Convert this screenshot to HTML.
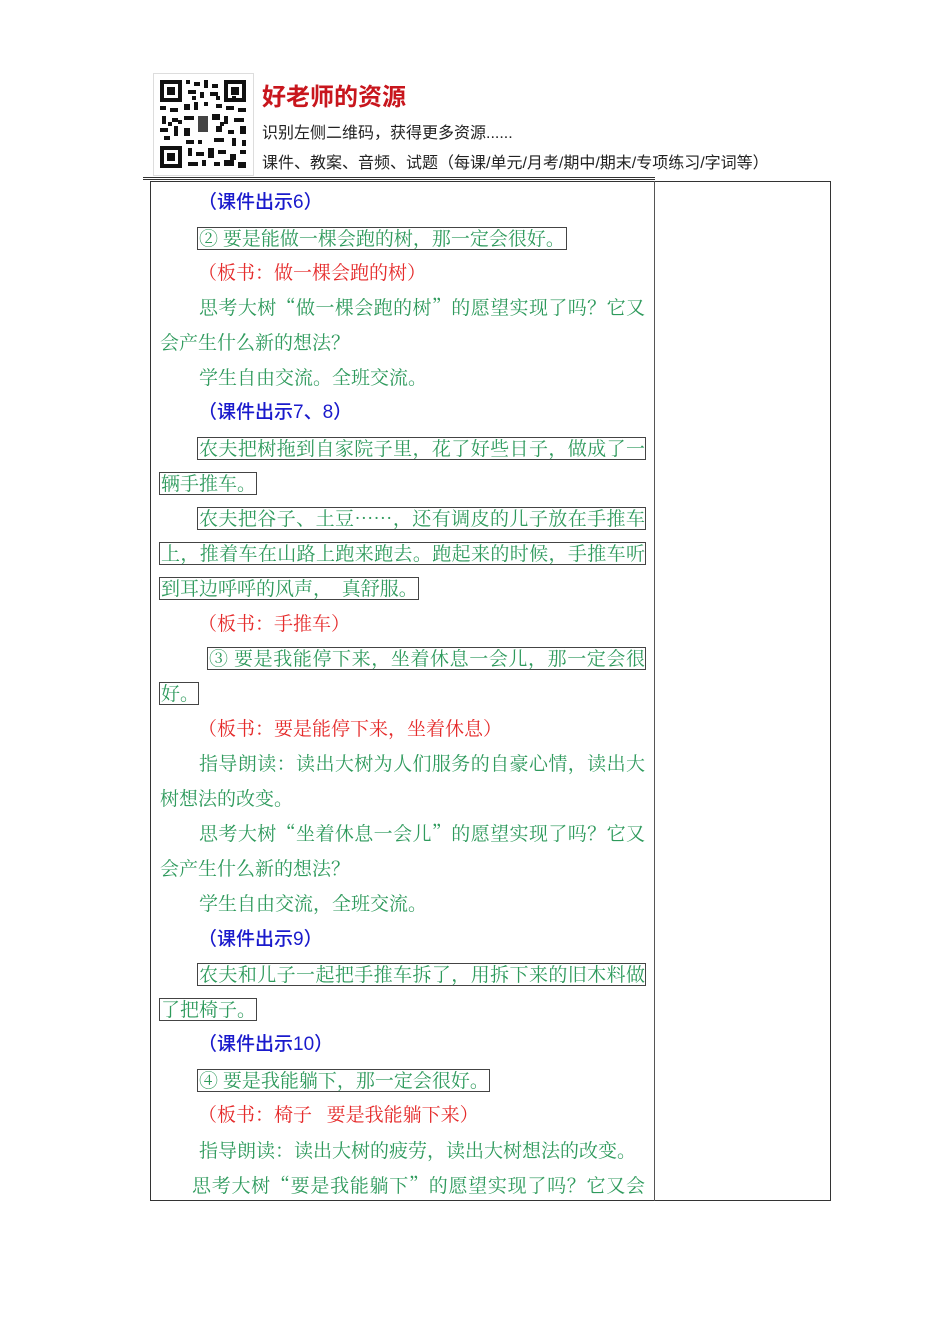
<!DOCTYPE html>
<html><head><meta charset="utf-8"><style>
body{margin:0;width:950px;height:1344px;background:#fff;position:relative;overflow:hidden}
.l{position:absolute;height:24px;line-height:24px;margin-top:-1px;font-size:19px;font-family:"Noto Serif CJK SC","Liberation Serif",serif;white-space:nowrap;color:#2e9a5c}
.j{text-align:justify;text-align-last:justify}
.b{border:1px solid #444;box-sizing:border-box;height:23px;line-height:19px;margin-top:0;padding-left:1px}
.bl{color:#1a1acc;font-family:"Liberation Sans","Noto Sans CJK SC",sans-serif;font-weight:500;margin-top:0}
.r{color:#e52a2a}
.h{position:absolute;font-family:"Liberation Sans","Noto Sans CJK SC",sans-serif;white-space:nowrap;color:#222}
</style></head><body>
<div style="position:absolute;left:153px;top:73px;width:101px;height:103px;border:1px solid #ddd;box-sizing:border-box;background:#fff">
<svg width="99" height="101" viewBox="0 0 99 101">
<g fill="#111">
<rect x="6" y="6" width="22" height="22"/><rect x="10" y="10" width="14" height="14" fill="#fff"/><rect x="13" y="13" width="8" height="8"/>
<rect x="70" y="6" width="22" height="22"/><rect x="74" y="10" width="14" height="14" fill="#fff"/><rect x="77" y="13" width="8" height="8"/>
<rect x="6" y="72" width="22" height="22"/><rect x="10" y="76" width="14" height="14" fill="#fff"/><rect x="13" y="79" width="8" height="8"/>
<path d="M32 6h4v4h-4zM40 8h6v4h-6zM50 6h4v8h-4zM58 10h6v4h-6zM34 16h8v4h-8zM46 18h4v6h-4zM56 18h8v4h-8zM6 32h6v4h-6zM16 34h8v4h-8zM30 30h6v6h-6zM40 28h4v8h-4zM62 30h6v4h-6zM72 32h8v4h-8zM84 34h8v4h-8zM8 42h4v8h-4zM18 44h6v4h-6zM30 42h10v4h-10zM58 40h8v6h-8zM70 42h4v8h-4zM80 44h10v4h-10zM6 54h8v4h-8zM20 52h4v10h-4zM30 54h6v8h-6zM62 52h6v6h-6zM74 56h6v4h-6zM86 52h6v8h-6zM10 62h6v4h-6zM32 66h8v4h-8zM60 64h10v4h-10zM78 64h4v8h-4zM88 66h4v6h-4zM34 74h4v8h-4zM42 78h8v4h-8zM54 74h6v10h-6zM64 76h8v4h-8zM76 80h6v6h-6zM86 76h6v4h-6zM34 88h10v4h-10zM48 86h4v6h-4zM60 88h6v4h-6zM70 86h10v6h-10zM84 88h8v6h-8zM38 22h4v4h-4zM62 22h4v4h-4zM24 46h4v4h-4zM66 48h4v4h-4zM44 66h4v4h-4zM14 48h4v4h-4zM82 22h-4v4h4zM50 28h4v4h-4z"/>
<rect x="40" y="38" width="18" height="24" fill="#fff"/><rect x="44" y="42" width="10" height="16" fill="#444"/>
</g></svg></div>
<div class="h" style="left:262px;top:77px;font-size:24px;font-weight:bold;color:#c8161d">好老师的资源</div>
<div class="h" style="left:262px;top:119px;font-size:16px">识别左侧二维码，获得更多资源......</div>
<div class="h" style="left:262px;top:149px;font-size:16px">课件、教案、音频、试题（每课/单元/月考/期中/期末/专项练习/字词等）</div>
<div style="position:absolute;left:143px;top:177px;width:512px;height:1px;background:#333"></div>
<div style="position:absolute;left:143px;top:179px;width:512px;height:1px;background:#333"></div>
<div style="position:absolute;left:150px;top:181px;width:681px;height:1020px;border:1px solid #333;box-sizing:border-box"></div>
<div style="position:absolute;left:654px;top:181px;width:1px;height:1020px;background:#555"></div>

<div class="l bl" style="left:198px;top:191px">（课件出示6）</div>
<div class="l b" style="left:197px;top:227px;width:370px">② 要是能做一棵会跑的树，那一定会很好。</div>
<div class="l r" style="left:198px;top:261px">（板书：做一棵会跑的树）</div>
<div class="l j" style="left:199px;top:296px;width:446px">思考大树“做一棵会跑的树”的愿望实现了吗？它又</div>
<div class="l" style="left:160px;top:331px">会产生什么新的想法？</div>
<div class="l" style="left:199px;top:366px">学生自由交流。全班交流。</div>
<div class="l bl" style="left:198px;top:401px">（课件出示7、8）</div>
<div class="l b j" style="left:197px;top:437px;width:449px">农夫把树拖到自家院子里，花了好些日子，做成了一</div>
<div class="l b" style="left:159px;top:472px;width:98px">辆手推车。</div>
<div class="l b j" style="left:197px;top:507px;width:449px">农夫把谷子、土豆……，还有调皮的儿子放在手推车</div>
<div class="l b j" style="left:159px;top:542px;width:487px">上，推着车在山路上跑来跑去。跑起来的时候，手推车听</div>
<div class="l b" style="left:159px;top:577px;width:260px">到耳边呼呼的风声，&nbsp;&nbsp;真舒服。</div>
<div class="l r" style="left:198px;top:612px">（板书：手推车）</div>
<div class="l b j" style="left:207px;top:647px;width:439px">③ 要是我能停下来，坐着休息一会儿，那一定会很</div>
<div class="l b" style="left:159px;top:682px;width:40px">好。</div>
<div class="l r" style="left:198px;top:717px">（板书：要是能停下来，坐着休息）</div>
<div class="l j" style="left:199px;top:752px;width:446px">指导朗读：读出大树为人们服务的自豪心情，读出大</div>
<div class="l" style="left:160px;top:787px">树想法的改变。</div>
<div class="l j" style="left:199px;top:822px;width:446px">思考大树“坐着休息一会儿”的愿望实现了吗？它又</div>
<div class="l" style="left:160px;top:857px">会产生什么新的想法？</div>
<div class="l" style="left:199px;top:892px">学生自由交流，全班交流。</div>
<div class="l bl" style="left:198px;top:928px">（课件出示9）</div>
<div class="l b j" style="left:197px;top:963px;width:449px">农夫和儿子一起把手推车拆了，用拆下来的旧木料做</div>
<div class="l b" style="left:159px;top:998px;width:98px">了把椅子。</div>
<div class="l bl" style="left:198px;top:1033px">（课件出示10）</div>
<div class="l b" style="left:197px;top:1069px;width:293px">④ 要是我能躺下，那一定会很好。</div>
<div class="l r" style="left:198px;top:1103px">（板书：椅子&nbsp;&nbsp;&nbsp;要是我能躺下来）</div>
<div class="l" style="left:199px;top:1139px">指导朗读：读出大树的疲劳，读出大树想法的改变。</div>
<div class="l j" style="left:192px;top:1174px;width:453px">思考大树“要是我能躺下”的愿望实现了吗？它又会</div>
</body></html>
